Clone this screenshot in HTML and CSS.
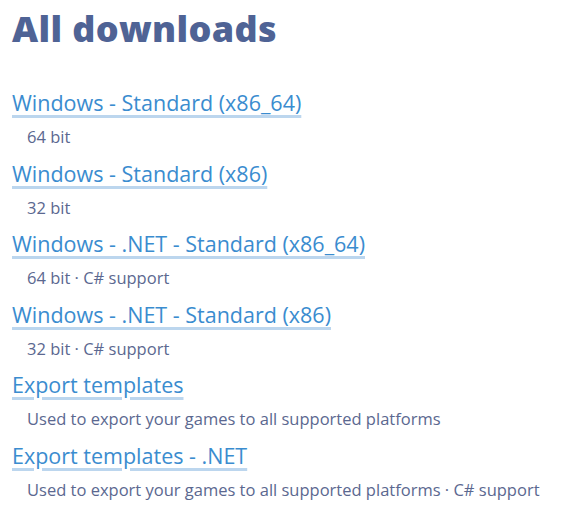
FILE: index.html
```html
<!DOCTYPE html>
<html lang="en">
<head>
    <meta charset="UTF-8">
    <meta name="viewport" content="width=device-width, initial-scale=1.0">
    <title>All downloads</title>
    <link rel="stylesheet" href="styles.css">
</head>
<body>
    <h1>All downloads</h1>

    <ul class="downloads">
        <li>
            <a href="#">Windows - Standard (x86_64)</a>
            <div class="info">64 bit</div>
        </li>
        <li>
            <a href="#">Windows - Standard (x86)</a>
            <div class="info">32 bit</div>
        </li>
        <li>
            <a href="#">Windows - .NET - Standard (x86_64)</a>
            <div class="info">64 bit · C# support</div>
        </li>
        <li>
            <a href="#">Windows - .NET - Standard (x86)</a>
            <div class="info">32 bit · C# support</div>
        </li>
        <li>
            <a href="#">Export templates</a>
            <div class="info">Used to export your games to all supported platforms</div>
        </li>
        <li>
            <a href="#">Export templates - .NET</a>
            <div class="info">Used to export your games to all supported platforms · C# support</div>
        </li>
    </ul>
</body>
</html>
```

FILE: styles.css
```css
:root {
    --heading: #4f6395;
    --link: #3a8ccf;
    --underline: #bcd6ee;
    --muted: #5b6890;
}
body {
    margin: 0;
    padding: 0 12px;
    background: #fff;
    font-family: 'Open Sans', sans-serif;
}
h1 {
    font-family: 'Open Sans', sans-serif;
    font-weight: 800;
    font-size: 36px;
    line-height: 40px;
    letter-spacing: 0.35px;
    color: var(--heading);
    margin: 9px 0 0;
}
.downloads {
    list-style: none;
    margin: 41px 0 0;
    padding: 0;
}
.downloads li {
    margin-bottom: 10.6px;
}
.downloads a {
    font-size: 21.5px;
    line-height: 26px;
    color: var(--link);
    text-decoration: underline;
    text-decoration-color: var(--underline);
    text-decoration-thickness: 2.5px;
    text-underline-offset: 4px;
}
.info {
    padding-left: 15px;
    margin-top: 8px;
    font-size: 16.5px;
    line-height: 26px;
    color: var(--muted);
}
```
